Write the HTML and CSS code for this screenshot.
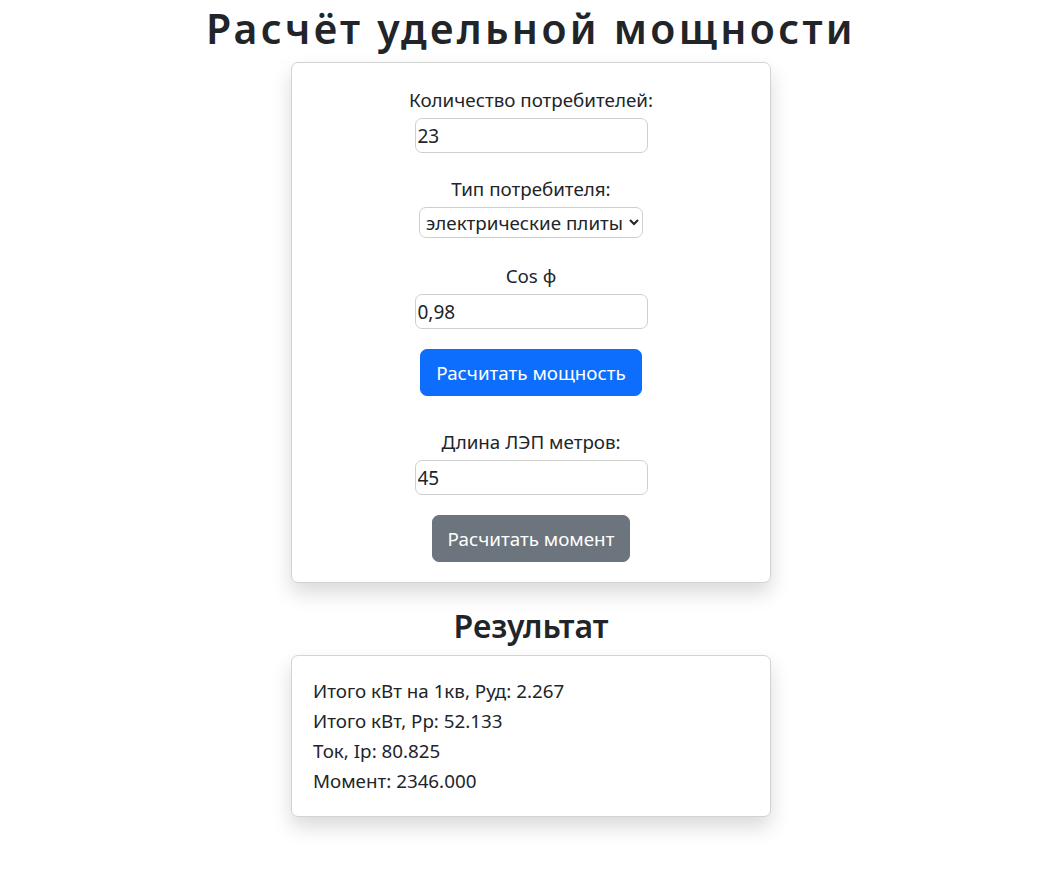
FILE: index.html
```html
<!DOCTYPE html>
<html lang="ru">
<head>
<meta charset="utf-8">
<title>Расчёт удельной мощности</title>
<link rel="stylesheet" href="styles.css">
</head>
<body>
<main class="page">
  <h1 class="title">Расчёт удельной мощности</h1>
  <section class="card form-card">
    <div class="group">
      <label class="label" for="count">Количество потребителей:</label>
      <input class="field" id="count" type="text" value="23">
    </div>
    <div class="group">
      <label class="label" for="type">Тип потребителя:</label>
      <select class="select" id="type">
        <option>электрические плиты</option>
      </select>
    </div>
    <div class="group group-cos">
      <label class="label" for="cos">Cos φ</label>
      <input class="field" id="cos" type="text" value="0,98">
    </div>
    <button class="btn btn-primary" type="button">Расчитать мощность</button>
    <div class="group group-gap">
      <label class="label" for="len">Длина ЛЭП метров:</label>
      <input class="field" id="len" type="text" value="45">
    </div>
    <button class="btn btn-secondary" type="button">Расчитать момент</button>
  </section>
  <h2 class="subtitle">Результат</h2>
  <section class="card result-card">
    <p class="line">Итого кВт на 1кв, Руд: 2.267</p>
    <p class="line">Итого кВт, Рр: 52.133</p>
    <p class="line">Ток, Ip: 80.825</p>
    <p class="line">Момент: 2346.000</p>
  </section>
</main>
</body>
</html>
```

FILE: styles.css
```css
* { box-sizing: border-box; }
html, body { margin: 0; padding: 0; background: #fff; }
body {
  font-family: "Noto Sans", "Open Sans", sans-serif;
  font-size: 18.8px;
  line-height: 30px;
  color: #212529;
}
.page {
  display: flex;
  flex-direction: column;
  align-items: center;
  padding-left: 14px;
  padding-bottom: 50px;
}
.title {
  margin: 0 0 6px;
  font-size: 41px;
  line-height: 56px;
  font-weight: 600;
  letter-spacing: 3.3px;
  text-align: center;
}
.card {
  width: 480px;
  background: #fff;
  border: 1px solid #d3d3d3;
  border-radius: 7px;
  box-shadow: 0 10px 20px rgba(0,0,0,0.15);
  padding: 20px;
}
.form-card {
  display: flex;
  flex-direction: column;
  align-items: center;
  padding-top: 22px;
}
.group {
  display: flex;
  flex-direction: column;
  align-items: center;
  margin-bottom: 20px;
}
.group + .group { margin-top: 1px; }
.group + .group-cos { margin-top: 3px; }
.group-gap { margin-top: 31px; }
.label {
  display: block;
  margin-bottom: 3px;
}
.field {
  width: 233px;
  height: 35px;
  border: 1px solid #cfcfcf;
  border-radius: 7px;
  padding: 0 2px;
  font: inherit;
  font-size: 19px;
  color: #212529;
  background: #fff;
}
.select {
  width: 224px;
  height: 31px;
  border: 1px solid #cfcfcf;
  border-radius: 7px;
  font: inherit;
  font-size: 18.8px;
  line-height: 27px;
  color: #212529;
  background: #fff;
  padding: 0 2px;
}
.btn {
  font: inherit;
  font-size: 18.8px;
  line-height: 30px;
  color: #fff;
  border: 1px solid transparent;
  border-radius: 7px;
  padding: 7.5px 15px;
  cursor: pointer;
}
.btn-primary { background: #0d6efd; border-color: #0d6efd; }
.btn-secondary { background: #6c757d; border-color: #6c757d; }
.subtitle {
  margin: 21px 0 8px;
  font-size: 32px;
  line-height: 43px;
  font-weight: 600;
  text-align: center;
}
.result-card { padding: 20px 21px; }
.line { margin: 0; }
```
